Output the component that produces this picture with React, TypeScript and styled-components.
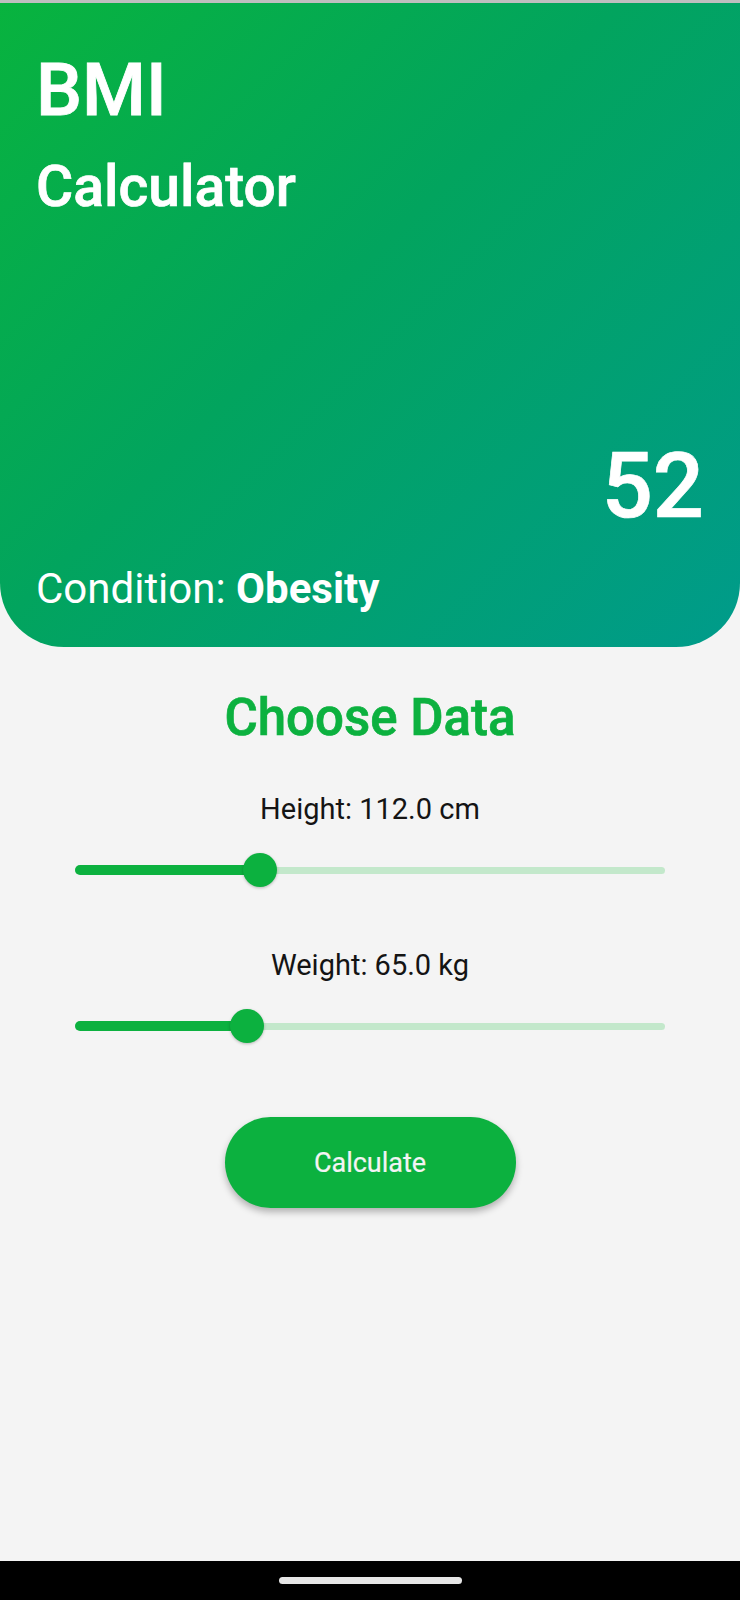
import React from "react"
import styled, {createGlobalStyle} from 'styled-components'

const GlobalStyle = createGlobalStyle`
  html, body {
    margin: 0;
    padding: 0;
    background: #f4f4f4;
    font-family: Roboto, "Noto Sans", Arial, sans-serif;
  }
  * { box-sizing: border-box; }
`;

const GREEN = '#0cb13f';

const Screen = styled.div`
  min-height: 1600px;
  display: flex;
  flex-direction: column;
  background: #f4f4f4;
`;

const StatusStrip = styled.div`
  height: 3px;
  background: #bfbfbf;
`;

const Header = styled.header`
  height: 644px;
  display: flex;
  flex-direction: column;
  padding: 44px 36px 34px;
  background: linear-gradient(135deg, #08b33e 0%, #02a45e 45%, #009b8b 100%);
  border-radius: 0 0 64px 64px;
  color: #fff;
`;

// medium weight isn't installed, so thicken the regular face a little
const Title = styled.h1`
  margin: 0;
  font-size: 73px;
  line-height: 86px;
  font-weight: 500;
  -webkit-text-stroke: 0.8px #fff;
`;

const Subtitle = styled.h2`
  margin: 20px 0 0;
  font-size: 57px;
  line-height: 67px;
  font-weight: 500;
  -webkit-text-stroke: 0.7px #fff;
`;

const Spacer = styled.div`
  flex: 1;
`;

const Score = styled.div`
  align-self: flex-end;
  font-size: 90px;
  line-height: 105px;
  font-weight: 500;
  -webkit-text-stroke: 0.7px #fff;
`;

const Condition = styled.div`
  margin-top: 25px;
  font-size: 42px;
  line-height: 49px;
  font-weight: 400;

  b {
    font-weight: 700;
  }
`;

const Body = styled.main`
  display: flex;
  flex-direction: column;
  align-items: center;
  padding-top: 41px;
`;

const SectionTitle = styled.h3`
  margin: 0 0 20px;
  font-size: 51px;
  line-height: 60px;
  font-weight: 500;
  color: ${GREEN};
  -webkit-text-stroke: 0.7px ${GREEN};
`;

const Field = styled.div`
  display: flex;
  flex-direction: column;
  align-items: center;
  margin-top: 24px;
  & + & {
    margin-top: 58px;
  }
`;

const Label = styled.div`
  font-size: 29px;
  line-height: 34px;
  color: #141414;
`;

const Slider = styled.div`
  width: 590px;
  height: 40px;
  margin-top: 24px;
  display: flex;
  align-items: center;
`;

const Track = styled.div`
  position: relative;
  width: 100%;
  height: 7px;
  border-radius: 4px;
  background: #c3e8cb;
`;

const ActiveTrack = styled.div`
  position: absolute;
  left: 0;
  top: 50%;
  height: 10px;
  transform: translateY(-50%);
  border-radius: 5px 0 0 5px;
  background: ${GREEN};
`;

const Thumb = styled.div`
  position: absolute;
  top: 50%;
  width: 34px;
  height: 34px;
  margin-left: -17px;
  transform: translateY(-50%);
  border-radius: 50%;
  background: ${GREEN};
  box-shadow: 0 1px 3px rgba(0, 0, 0, 0.25);
`;

const Button = styled.button`
  margin-top: 71px;
  width: 291px;
  height: 91px;
  border: none;
  border-radius: 46px;
  background: ${GREEN};
  color: #f4f4f4;
  font-family: Roboto, Arial, sans-serif;
  font-size: 27px;
  font-weight: 400;
  -webkit-text-stroke: 0.2px #f4f4f4;
  box-shadow: 0 4px 7px rgba(0, 0, 0, 0.28);
  cursor: pointer;
`;

const NavBar = styled.div`
  margin-top: auto;
  height: 39px;
  background: #000;
  display: flex;
  justify-content: center;
  align-items: center;
`;

const Handle = styled.div`
  width: 183px;
  height: 7px;
  border-radius: 4px;
  background: #e6e6e6;
`;

interface SliderField {
    label: string,
    value: number,
    min: number,
    max: number,
    unit: string
}

const fields: Array<SliderField> = [
    {label: 'Height', value: 112, min: 50, max: 248, unit: 'cm'},
    {label: 'Weight', value: 65, min: 30, max: 150, unit: 'kg'},
];

const App = () => {
    return (
        <>
            <GlobalStyle/>
            <Screen>
                <StatusStrip/>
                <Header>
                    <Title>BMI</Title>
                    <Subtitle>Calculator</Subtitle>
                    <Spacer/>
                    <Score>52</Score>
                    <Condition>Condition: <b>Obesity</b></Condition>
                </Header>

                <Body>
                    <SectionTitle>Choose Data</SectionTitle>
                    {fields.map((f) => {
                        const pct = ((f.value - f.min) / (f.max - f.min)) * 100;
                        return (
                            <Field key={f.label}>
                                <Label>{f.label}: {f.value.toFixed(1)} {f.unit}</Label>
                                <Slider>
                                    <Track>
                                        <ActiveTrack style={{width: `${pct}%`}}/>
                                        <Thumb style={{left: `${pct}%`}}/>
                                    </Track>
                                </Slider>
                            </Field>
                        )
                    })}
                    <Button>Calculate</Button>
                </Body>

                <NavBar>
                    <Handle/>
                </NavBar>
            </Screen>
        </>
    )
};

export default App
